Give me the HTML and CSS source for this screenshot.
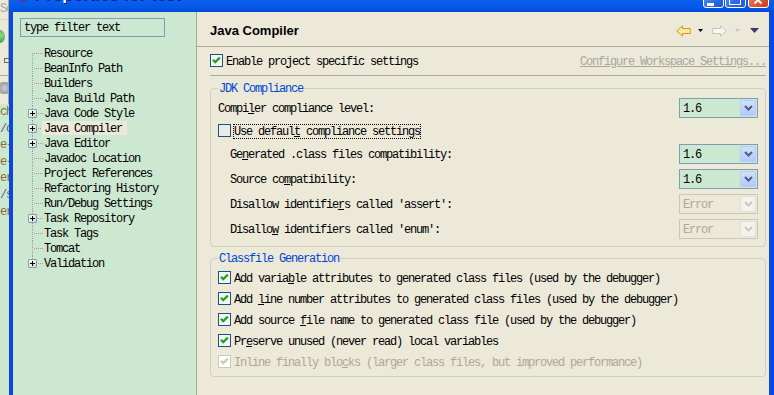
FILE: index.html
```html
<!DOCTYPE html>
<html lang="en">
<head>
<meta charset="utf-8">
<title>Properties for test</title>
<link rel="stylesheet" href="styles.css">
</head>
<body>
<div class="screen">
  <div class="behind">
    <div class="behind-top">
      <div class="bh-text">Se</div>
      <div class="bh-rule"></div>
      <div class="bh-ball"></div>
      <div class="bh-box"></div>
      <div class="bh-rule2"></div>
      <div class="bh-icon"></div>
    </div>
    <div class="behind-code">
      <div>ch</div>
      <div class="c2">/c</div>
      <div>e-</div>
      <div>e-</div>
      <div>er</div>
      <div class="c2">/s</div>
      <div>er</div>
    </div>
  </div>

  <div class="window">
    <div class="titlebar">
      <div class="title-row">
        <span class="title-icon"></span>
        <span class="title-text">Properties for test</span>
        <span class="tb-btn tb-min"><svg width="19" height="19" viewBox="0 0 19 19"><rect x="3" y="15" width="7" height="3" fill="#fff"/></svg></span>
        <span class="tb-btn tb-max"><svg width="19" height="19" viewBox="0 0 19 19"><rect x="3.5" y="4.5" width="11" height="12" fill="none" stroke="#fff"/><rect x="3" y="4" width="12" height="3" fill="#fff"/></svg></span>
        <span class="tb-btn tb-close"><svg width="19" height="19" viewBox="0 0 19 19"><path d="M5.5 8.5l7 7M12.5 8.5l-7 7" stroke="#fff" stroke-width="2"/></svg></span>
      </div>
    </div>

    <div class="frame">
      <aside class="nav">
        <div class="filter">type filter text</div>
        <ul class="tree">
          <li class="node first"><span class="twig"></span><span class="label">Resource</span></li>
          <li class="node"><span class="twig"></span><span class="label">BeanInfo Path</span></li>
          <li class="node"><span class="twig"></span><span class="label">Builders</span></li>
          <li class="node"><span class="twig"></span><span class="label">Java Build Path</span></li>
          <li class="node"><span class="twig"><span class="expander"></span></span><span class="label">Java Code Style</span></li>
          <li class="node"><span class="twig"><span class="expander"></span></span><span class="label sel">Java Compiler</span></li>
          <li class="node"><span class="twig"><span class="expander"></span></span><span class="label">Java Editor</span></li>
          <li class="node"><span class="twig"></span><span class="label">Javadoc Location</span></li>
          <li class="node"><span class="twig"></span><span class="label">Project References</span></li>
          <li class="node"><span class="twig"></span><span class="label">Refactoring History</span></li>
          <li class="node"><span class="twig"></span><span class="label">Run/Debug Settings</span></li>
          <li class="node"><span class="twig"><span class="expander"></span></span><span class="label">Task Repository</span></li>
          <li class="node"><span class="twig"></span><span class="label">Task Tags</span></li>
          <li class="node"><span class="twig"></span><span class="label">Tomcat</span></li>
          <li class="node last"><span class="twig"><span class="expander"></span></span><span class="label">Validation</span></li>
        </ul>
      </aside>

      <section class="page">
        <header class="page-head">
          <h1 class="page-title">Java Compiler</h1>
          <div class="hist">
            <svg class="back" width="15" height="12" viewBox="0 0 15 12"><path d="M0.8 6L6.5 0.8V3.5H14.3V8.5H6.5V11.2Z" fill="#fde9a4" stroke="#d6961c"/></svg>
            <svg class="drop" width="5" height="3" viewBox="0 0 5 3"><path d="M0 0H5L2.5 3Z" fill="#000"/></svg>
            <svg class="fwd" width="15" height="12" viewBox="0 0 15 12"><path d="M14.2 6L8.5 0.8V3.5H0.7V8.5H8.5V11.2Z" fill="#f6f6f4" stroke="#c4c4c0"/></svg>
            <svg class="drop2" width="5" height="3" viewBox="0 0 5 3"><path d="M0 0H5L2.5 3Z" fill="#c4c4c0"/></svg>
            <svg class="menu" width="9" height="5" viewBox="0 0 9 5"><path d="M0 0H9L4.5 5Z" fill="#3a3a6c"/></svg>
          </div>
        </header>

        <div class="page-body">
          <div class="enable-row">
            <svg class="cb" width="13" height="13" viewBox="0 0 13 13"><rect x=".5" y=".5" width="12" height="12" fill="#f4f4f0" stroke="#1c5180"/><path d="M3 5.8l2.2 2.4 4.6-4.6" fill="none" stroke="#21a121" stroke-width="2.3"/></svg>
            <span class="txt">Enable pro<u>j</u>ect specific settings</span>
            <a class="txt link">Configure Workspace Settings...</a>
          </div>
          <div class="sep"></div>

          <div class="group group-jdk">
            <div class="group-title">JDK Compliance</div>
            <div class="opt r1">
              <span class="txt">Compi<u>l</u>er compliance level:</span>
              <div class="combo"><span class="val">1.6</span><span class="btn"><svg width="9" height="6" viewBox="0 0 9 6"><path d="M1 1l3.5 3.5L8 1" fill="none" stroke="#4b5d8c" stroke-width="2"/></svg></span></div>
            </div>
            <div class="opt r2">
              <svg class="cb" width="13" height="13" viewBox="0 0 13 13"><rect x=".5" y=".5" width="12" height="12" fill="#ecece6" stroke="#1c5180"/></svg>
              <span class="focus">Use defaul<u>t</u> compliance settings</span>
            </div>
            <div class="opt r3">
              <span class="txt">Ge<u>n</u>erated .class files compatibility:</span>
              <div class="combo"><span class="val">1.6</span><span class="btn"><svg width="9" height="6" viewBox="0 0 9 6"><path d="M1 1l3.5 3.5L8 1" fill="none" stroke="#4b5d8c" stroke-width="2"/></svg></span></div>
            </div>
            <div class="opt rn">
              <span class="txt">Source co<u>m</u>patibility:</span>
              <div class="combo"><span class="val">1.6</span><span class="btn"><svg width="9" height="6" viewBox="0 0 9 6"><path d="M1 1l3.5 3.5L8 1" fill="none" stroke="#4b5d8c" stroke-width="2"/></svg></span></div>
            </div>
            <div class="opt rn">
              <span class="txt">Disallow identifie<u>r</u>s called 'assert':</span>
              <div class="combo off"><span class="val">Error</span><span class="btn"><svg width="9" height="6" viewBox="0 0 9 6"><path d="M1 1l3.5 3.5L8 1" fill="none" stroke="#cac8bb" stroke-width="2"/></svg></span></div>
            </div>
            <div class="opt rn">
              <span class="txt">Disallo<u>w</u> identifiers called 'enum':</span>
              <div class="combo off"><span class="val">Error</span><span class="btn"><svg width="9" height="6" viewBox="0 0 9 6"><path d="M1 1l3.5 3.5L8 1" fill="none" stroke="#cac8bb" stroke-width="2"/></svg></span></div>
            </div>
          </div>

          <div class="group group-cls">
            <div class="group-title">Classfile Generation</div>
            <div class="check-row firstc">
              <svg class="cb" width="13" height="13" viewBox="0 0 13 13"><rect x=".5" y=".5" width="12" height="12" fill="#f4f4f0" stroke="#1c5180"/><path d="M3 5.8l2.2 2.4 4.6-4.6" fill="none" stroke="#21a121" stroke-width="2.3"/></svg>
              <span class="txt">Add varia<u>b</u>le attributes to generated class files (used by the debugger)</span>
            </div>
            <div class="check-row">
              <svg class="cb" width="13" height="13" viewBox="0 0 13 13"><rect x=".5" y=".5" width="12" height="12" fill="#f4f4f0" stroke="#1c5180"/><path d="M3 5.8l2.2 2.4 4.6-4.6" fill="none" stroke="#21a121" stroke-width="2.3"/></svg>
              <span class="txt">Add <u>l</u>ine number attributes to generated class files (used by the debugger)</span>
            </div>
            <div class="check-row">
              <svg class="cb" width="13" height="13" viewBox="0 0 13 13"><rect x=".5" y=".5" width="12" height="12" fill="#f4f4f0" stroke="#1c5180"/><path d="M3 5.8l2.2 2.4 4.6-4.6" fill="none" stroke="#21a121" stroke-width="2.3"/></svg>
              <span class="txt">Add source <u>f</u>ile name to generated class file (used by the debugger)</span>
            </div>
            <div class="check-row">
              <svg class="cb" width="13" height="13" viewBox="0 0 13 13"><rect x=".5" y=".5" width="12" height="12" fill="#f4f4f0" stroke="#1c5180"/><path d="M3 5.8l2.2 2.4 4.6-4.6" fill="none" stroke="#21a121" stroke-width="2.3"/></svg>
              <span class="txt">Pr<u>e</u>serve unused (never read) local variables</span>
            </div>
            <div class="check-row disabled">
              <svg class="cb" width="13" height="13" viewBox="0 0 13 13"><rect x=".5" y=".5" width="12" height="12" fill="#ffffff" stroke="#cac8bb"/><path d="M3 5.8l2.2 2.4 4.6-4.6" fill="none" stroke="#cac8bb" stroke-width="2.3"/></svg>
              <span class="txt">Inline finally blo<u>c</u>ks (larger class files, but improved performance)</span>
            </div>
          </div>
        </div>
      </section>
    </div>
  </div>
</div>
</body>
</html>
```

FILE: styles.css
```css
* { box-sizing: border-box; margin: 0; padding: 0; }

html, body { width: 774px; height: 395px; overflow: hidden; }

body {
  font-family: "Liberation Mono", "DejaVu Sans Mono", monospace;
  font-size: 12px;
  letter-spacing: -1.2px;
  line-height: 14px;
  color: #000;
  background: #ece9d8;
}

.screen { display: flex; width: 774px; height: 395px; }

/* ---- the editor window visible behind the dialog ---- */
.behind {
  width: 9px;
  flex: none;
  display: flex;
  flex-direction: column;
  overflow: hidden;
  background: #cde8d0;
}
.behind-top {
  height: 104px;
  flex: none;
  display: flex;
  flex-direction: column;
  background: #ece9d8;
  border-right: 1px solid #a5a49a;
}
.bh-text { color: #a8a8a0; margin-top: 2px; white-space: nowrap; }
.bh-rule { height: 1px; background: #d6d4c8; margin-top: 3px; }
.bh-ball {
  width: 10px; height: 13px; border-radius: 50%;
  margin: 10px 0 0 -5px;
  background: radial-gradient(circle at 60% 40%, #8fdc8f, #2b8a2b);
}
.bh-box { width: 6px; height: 5px; border: 1px solid #6a6a60; margin: 15px 0 0 4px; }
.bh-rule2 { height: 1px; background: #aca899; margin-top: 12px; }
.bh-icon {
  width: 9px; height: 12px; margin-top: 6px; border-radius: 3px;
  background: radial-gradient(circle, #d0d0d0, #8e8e8e);
}
.behind-code div { height: 16.6px; line-height: 16px; color: #8b6a3c; white-space: nowrap; }
.behind-code .c2 { color: #5a5a8a; }

/* ---- dialog window ---- */
.window { flex: 1; min-width: 0; display: flex; flex-direction: column; }

.titlebar {
  height: 12px;
  flex: none;
  overflow: hidden;
  background: linear-gradient(#0a60f0, #0555e6 70%, #0449da);
}
.title-row {
  display: flex;
  align-items: center;
  height: 21px;
  margin-top: -13px;
  padding: 0 5px 0 7px;
}
.title-icon {
  width: 13px; height: 13px; flex: none; border-radius: 50%;
  margin: 0 5px 4px 0;
  background: radial-gradient(circle at 35% 30%, #c0b0f4, #5b3fb0 60%, #2a1a70);
}
.title-text {
  font-family: "Liberation Sans", Arial, sans-serif;
  font-weight: bold;
  font-size: 17px;
  line-height: 20px;
  letter-spacing: 0;
  color: #fff;
  text-shadow: 1px 1px 0 #0a1f8a;
  white-space: nowrap;
  margin: 0 auto 6px 0;
}
.tb-btn {
  width: 21px; height: 21px; flex: none;
  display: flex;
  border: 1px solid #fff;
  border-radius: 3px;
}
.tb-btn svg { display: block; }
.tb-min, .tb-max { background: linear-gradient(135deg, #6aa4ff, #2f6bea 60%, #1f56d8); }
.tb-max { margin-left: 1px; }
.tb-close { margin-left: 2px; background: linear-gradient(135deg, #f39474, #e0582f 60%, #c6401a); }

.frame {
  flex: 1;
  min-height: 0;
  display: flex;
  border-left: 4px solid #0848dc;
  border-right: 5px solid #0848dc;
}

/* ---- left navigation ---- */
.nav {
  width: 184px;
  flex: none;
  background: #cde8d0;
  border-right: 1px solid #aca899;
  padding: 6px 0 0 7px;
}
.filter {
  width: 145px;
  height: 19px;
  border: 1px solid #7f9db9;
  padding: 2px 0 0 3px;
  line-height: 15px;
  white-space: nowrap;
}
.tree { list-style: none; margin-top: 9px; padding-left: 7px; }
.node { display: flex; align-items: flex-start; height: 15px; white-space: nowrap; }
.twig { position: relative; width: 17px; height: 15px; flex: none; }
.twig::before {
  content: "";
  position: absolute;
  left: 5px; top: 0; bottom: 0; width: 1px;
  background: linear-gradient(#a0a0a0 50%, transparent 50%) 0 0 / 1px 2px repeat-y;
}
.node.first .twig::before { top: 7px; }
.node.last .twig::before { bottom: 7px; }
.twig::after {
  content: "";
  position: absolute;
  left: 6px; top: 7px; width: 10px; height: 1px;
  background: linear-gradient(to right, transparent 50%, #a0a0a0 50%) 0 0 / 2px 1px repeat-x;
}
.expander {
  position: absolute;
  left: 1px; top: 3px;
  width: 9px; height: 9px;
  z-index: 1;
  border: 1px solid #7f9db9;
  border-radius: 1px;
  background: linear-gradient(135deg, #ffffff, #d6d2c6);
}
.expander::before {
  content: ""; position: absolute; left: 1px; top: 3px; width: 5px; height: 1px; background: #000;
}
.expander::after {
  content: ""; position: absolute; left: 3px; top: 1px; width: 1px; height: 5px; background: #000;
}
.label { height: 14px; line-height: 16px; }
.label.sel { background: #ece9d8; margin-left: -2px; padding: 0 5px 0 2px; position: relative; z-index: 1; }

/* ---- right page ---- */
.page { flex: 1; min-width: 0; display: flex; flex-direction: column; background: #ece9d8; }

.page-head {
  height: 35px;
  flex: none;
  display: flex;
  align-items: center;
  padding: 3px 10px 0 13px;
  border-bottom: 1px solid #aca899;
}
.page-title {
  font-family: "Liberation Sans", Arial, sans-serif;
  font-size: 13px;
  font-weight: bold;
  letter-spacing: 0;
  color: #000;
}
.hist { margin-left: auto; display: flex; align-items: center; }
.hist svg { display: block; flex: none; }
.hist .back { margin-right: 7px; }
.hist .drop { margin-right: 9px; }
.hist .fwd { margin-right: 8px; }
.hist .drop2 { margin-right: 10px; }

.page-body { display: flex; flex-direction: column; padding: 0 3px 0 13px; }

.txt { height: 14px; line-height: 16px; }

.enable-row { display: flex; align-items: center; height: 19px; margin-top: 4px; white-space: nowrap; }
.cb { display: block; flex: none; margin-right: 3px; }
.link { margin-left: auto; color: #a8a79e; text-decoration: underline; white-space: nowrap; }
.sep { height: 1px; background: #aca899; margin-top: 5px; }

.group {
  display: flex;
  flex-direction: column;
  border: 1px solid #d0d0bf;
  border-radius: 4px;
  padding: 0 7px 7px 7px;
}
.group-jdk { margin-top: 12px; }
.group-cls { margin-top: 11px; padding-bottom: 4px; }
.group-title {
  align-self: flex-start;
  height: 14px;
  margin-top: -8px;
  padding: 0 1px;
  background: #ece9d8;
  color: #0046d5;
  line-height: 16px;
  white-space: nowrap;
}

.opt { display: flex; align-items: center; height: 20px; white-space: nowrap; }
.opt.r1 { margin-top: 3px; }
.opt.r2 { margin-top: 3px; height: 19px; }
.opt.r3 { margin-top: 4px; padding-left: 12px; }
.opt.rn { margin-top: 5px; padding-left: 12px; }
.focus { height: 15px; border: 1px dotted #000; margin: 2px 0 0 -1px; line-height: 15px; }

.combo {
  margin-left: auto;
  width: 79px;
  height: 20px;
  flex: none;
  display: flex;
  border: 1px solid #7f9db9;
  background: #cde8d0;
  padding: 1px;
}
.combo .val { flex: 1; padding-left: 2px; line-height: 18px; }
.combo .btn {
  width: 16px; height: 16px; flex: none;
  display: flex; align-items: center; justify-content: center;
  border: 1px solid #b8ccf6;
  border-radius: 2px;
  background: linear-gradient(#d2e0fd, #b2c9f9);
}
.combo .btn svg { display: block; }
.combo.off { border-color: #c9c7ba; background: #ece9d8; }
.combo.off .val { color: #aca899; }
.combo.off .btn { border-color: #e2e0d5; background: #f3f2ec; }

.check-row { display: flex; align-items: center; height: 21px; white-space: nowrap; }
.check-row.firstc { margin-top: 2px; }
.disabled { color: #aca899; }
```
